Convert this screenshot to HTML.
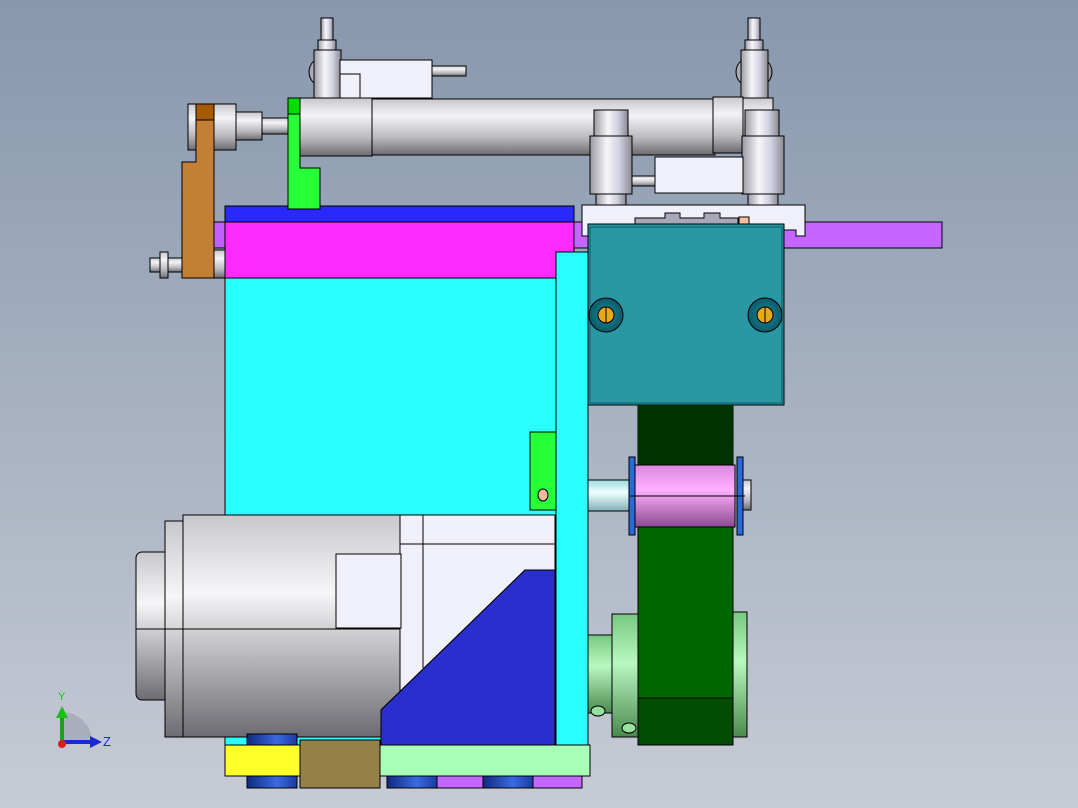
<!DOCTYPE html>
<html><head><meta charset="utf-8"><style>
html,body{margin:0;padding:0;width:1078px;height:808px;overflow:hidden}
svg{display:block}
</style></head><body>
<svg width="1078" height="808" viewBox="0 0 1078 808" xmlns="http://www.w3.org/2000/svg" font-family="Liberation Sans, sans-serif">
<defs>
<linearGradient id="bg" x1="0" y1="0" x2="0" y2="1"><stop offset="0" stop-color="#8797ad"/><stop offset="1" stop-color="#c7cbd5"/></linearGradient>
<linearGradient id="cyl" x1="0" y1="0" x2="0" y2="1"><stop offset="0" stop-color="#c8c8cc"/><stop offset="0.3" stop-color="#f4f4f8"/><stop offset="0.7" stop-color="#b8b8bc"/><stop offset="1" stop-color="#6a6a70"/></linearGradient>
<linearGradient id="vcyl" x1="0" y1="0" x2="1" y2="0"><stop offset="0" stop-color="#9a9aa2"/><stop offset="0.4" stop-color="#f6f6fa"/><stop offset="0.7" stop-color="#d0d0e0"/><stop offset="1" stop-color="#8a8a92"/></linearGradient>
<linearGradient id="mot" x1="0" y1="0" x2="0" y2="1"><stop offset="0" stop-color="#c8c8cc"/><stop offset="0.35" stop-color="#f6f6f8"/><stop offset="0.6" stop-color="#c0c0c4"/><stop offset="1" stop-color="#6c6c72"/></linearGradient>
<linearGradient id="pink" x1="0" y1="0" x2="0" y2="1"><stop offset="0" stop-color="#d888e0"/><stop offset="0.4" stop-color="#ffb0ff"/><stop offset="1" stop-color="#8a4a90"/></linearGradient>
<linearGradient id="shaft" x1="0" y1="0" x2="0" y2="1"><stop offset="0" stop-color="#a0d8e0"/><stop offset="0.4" stop-color="#f0ffff"/><stop offset="1" stop-color="#80b0b8"/></linearGradient>
<linearGradient id="hub" x1="0" y1="0" x2="0" y2="1"><stop offset="0" stop-color="#78c880"/><stop offset="0.4" stop-color="#b8f8c0"/><stop offset="1" stop-color="#4a8a50"/></linearGradient>
<linearGradient id="roll" x1="0" y1="0" x2="1" y2="0"><stop offset="0" stop-color="#102a80"/><stop offset="0.6" stop-color="#3a6ae0"/><stop offset="1" stop-color="#1a3aa0"/></linearGradient>
<radialGradient id="scr"><stop offset="0" stop-color="#1a8a9a"/><stop offset="1" stop-color="#0a5a68"/></radialGradient>
</defs>
<rect width="1078" height="808" fill="url(#bg)"/>
<g stroke="#000" stroke-width="1">
<!-- valves top -->
<rect x="321" y="18" width="12" height="22" fill="url(#vcyl)"/>
<rect x="318" y="40" width="18" height="10" fill="url(#vcyl)"/>
<ellipse cx="327" cy="72" rx="18" ry="16" fill="url(#vcyl)"/>
<rect x="314" y="50" width="27" height="50" fill="url(#vcyl)"/>
<rect x="340" y="60" width="92" height="38" fill="#f0f0fa"/>
<rect x="340" y="74" width="20" height="24" fill="#f0f0fa"/>
<rect x="432" y="66" width="34" height="10" fill="url(#cyl)"/>
<rect x="748" y="18" width="12" height="22" fill="url(#vcyl)"/>
<rect x="745" y="40" width="18" height="10" fill="url(#vcyl)"/>
<ellipse cx="754" cy="72" rx="18" ry="16" fill="url(#vcyl)"/>
<rect x="741" y="50" width="27" height="50" fill="url(#vcyl)"/>
<!-- cylinder -->
<rect x="345" y="99" width="370" height="56" fill="url(#cyl)"/>
<rect x="713" y="97" width="30" height="56" fill="url(#cyl)"/>
<rect x="743" y="98" width="30" height="52" fill="url(#cyl)"/>
<rect x="290" y="98" width="55" height="58" fill="url(#cyl)"/>
<rect x="290" y="98" width="82" height="58" fill="url(#cyl)"/>
<rect x="260" y="118" width="32" height="16" fill="url(#cyl)"/>
<rect x="236" y="112" width="26" height="28" fill="url(#cyl)"/>
<rect x="188" y="104" width="48" height="46" fill="url(#cyl)"/>
<!-- right valve assemblies -->
<rect x="594" y="110" width="34" height="26" fill="url(#vcyl)"/>
<rect x="590" y="136" width="42" height="58" fill="url(#vcyl)"/>
<rect x="596" y="194" width="30" height="12" fill="url(#vcyl)"/>
<rect x="745" y="110" width="34" height="26" fill="url(#vcyl)"/>
<rect x="742" y="136" width="42" height="58" fill="url(#vcyl)"/>
<rect x="748" y="194" width="30" height="12" fill="url(#vcyl)"/>
<rect x="655" y="157" width="88" height="36" fill="#f0f0fa"/>
<rect x="632" y="176" width="23" height="10" fill="url(#cyl)"/>
<!-- purple bars -->
<rect x="210" y="222" width="16" height="26" fill="#c060ff"/>
<rect x="574" y="222" width="368" height="26" fill="#c466ff"/>
<!-- brown arm -->
<polygon points="196,104 214,104 214,278 182,278 182,162 196,162" fill="#c27f35"/>
<rect x="196" y="104" width="18" height="16" fill="#a85a00"/>
<rect x="150" y="258" width="32" height="14" fill="url(#cyl)"/>
<rect x="160" y="252" width="8" height="26" fill="url(#cyl)"/>
<rect x="214" y="250" width="11" height="28" fill="url(#cyl)"/>
<!-- blue/magenta -->
<rect x="225" y="206" width="349" height="16" fill="#2828ff"/>
<rect x="225" y="222" width="349" height="56" fill="#ff2aff"/>
<!-- green bracket -->
<polygon points="288,98 300,98 300,168 320,168 320,209 288,209" fill="#28ff38"/>
<rect x="288" y="98" width="12" height="16" fill="#00dd00"/>
<!-- cyan -->
<rect x="225" y="278" width="331" height="467" fill="#2affff"/>
<rect x="556" y="252" width="32" height="493" fill="#2affff"/>
<polygon points="530,432 556,432 556,510 530,510" fill="#28ff38"/>
<ellipse cx="543" cy="495" rx="5" ry="6" fill="#f8b8a0"/>
<!-- bracket white -->
<polygon points="582,205 805,205 805,236 796,236 796,230 593,230 593,236 582,236" fill="#f0f0fa"/>
<polygon points="635,218 665,218 665,213 680,213 680,218 704,218 704,213 720,213 720,218 738,218 738,224 635,224" fill="#a8a8b8"/>
<rect x="739" y="217" width="10" height="8" fill="#f8c0a0"/>
<!-- teal box -->
<rect x="588" y="224" width="196" height="181" fill="#2a98a4"/>
<rect x="590" y="227" width="192" height="176" fill="none" stroke="#0a5a68"/>
<circle cx="606" cy="315" r="17" fill="url(#scr)"/>
<circle cx="606" cy="315" r="8" fill="#e8a818"/>
<line x1="606" y1="307" x2="606" y2="323"/>
<circle cx="765" cy="315" r="17" fill="url(#scr)"/>
<circle cx="765" cy="315" r="8" fill="#e8a818"/>
<line x1="765" y1="307" x2="765" y2="323"/>
<!-- belt -->
<rect x="638" y="405" width="95" height="340" fill="#006600"/>
<rect x="638" y="405" width="95" height="60" fill="#003300" stroke="none"/>
<rect x="638" y="698" width="95" height="47" fill="#004c00"/>
<!-- shaft, pulley -->
<rect x="588" y="480" width="42" height="31" fill="url(#shaft)"/>
<rect x="634" y="465" width="101" height="62" fill="url(#pink)"/>
<rect x="629" y="457" width="6" height="78" fill="#2a6ad8"/>
<rect x="737" y="457" width="6" height="78" fill="#2a6ad8"/>
<rect x="743" y="480" width="8" height="30" fill="url(#cyl)"/>
<line x1="630" y1="496" x2="745" y2="496"/>
<!-- hub -->
<rect x="588" y="635" width="46" height="78" fill="url(#hub)"/>
<rect x="612" y="614" width="26" height="123" fill="url(#hub)"/>
<rect x="733" y="612" width="14" height="125" fill="url(#hub)"/>
<ellipse cx="598" cy="711" rx="7" ry="5" fill="#98e0a0"/>
<ellipse cx="629" cy="728" rx="7" ry="5" fill="#98e0a0"/>
<!-- motor -->
<rect x="136" y="552" width="34" height="148" rx="6" fill="url(#mot)"/>
<rect x="165" y="521" width="20" height="216" fill="url(#mot)"/>
<rect x="183" y="515" width="220" height="222" fill="url(#mot)"/>
<line x1="136" y1="629" x2="400" y2="629"/>
<polygon points="400,515 555,515 555,570 525,570 381,710 400,700" fill="#f0f0fa"/>
<polygon points="336,554 401,554 401,628 336,628" fill="#f0f0fa"/>
<line x1="400" y1="544" x2="555" y2="544"/>
<line x1="423" y1="515" x2="423" y2="668"/>
<!-- gusset -->
<polygon points="525,570 555,570 555,745 381,745 381,710" fill="#2a2ecc"/>
<!-- base -->
<rect x="247" y="734" width="50" height="11" fill="url(#roll)"/>
<rect x="225" y="745" width="75" height="31" fill="#ffff2a"/>
<rect x="380" y="745" width="210" height="31" fill="#a8ffb8"/>
<rect x="247" y="776" width="50" height="12" fill="url(#roll)"/>
<rect x="387" y="776" width="50" height="12" fill="url(#roll)"/>
<rect x="437" y="776" width="46" height="12" fill="#c466ff"/>
<rect x="483" y="776" width="50" height="12" fill="url(#roll)"/>
<rect x="533" y="776" width="49" height="12" fill="#c466ff"/>
<rect x="300" y="740" width="80" height="48" fill="#95804a"/>
</g>
<!-- triad -->
<path d="M62 745 L62 712 A30 30 0 0 1 92 742 Z" fill="#9aa0aa" opacity="0.6"/>
<rect x="60" y="716" width="4" height="28" fill="#1aa01a"/>
<polygon points="56,718 62,706 68,718" fill="#1ac01a"/>
<rect x="62" y="740" width="30" height="4" fill="#1a2ad0"/>
<polygon points="90,736 102,742 90,748" fill="#1a2ad0"/>
<circle cx="62" cy="744" r="4" fill="#e01a1a"/>
<text x="58" y="700" font-size="11" fill="#1ac01a">Y</text>
<text x="103" y="746" font-size="13" fill="#1a2ad0">Z</text>
</svg>
</body></html>
